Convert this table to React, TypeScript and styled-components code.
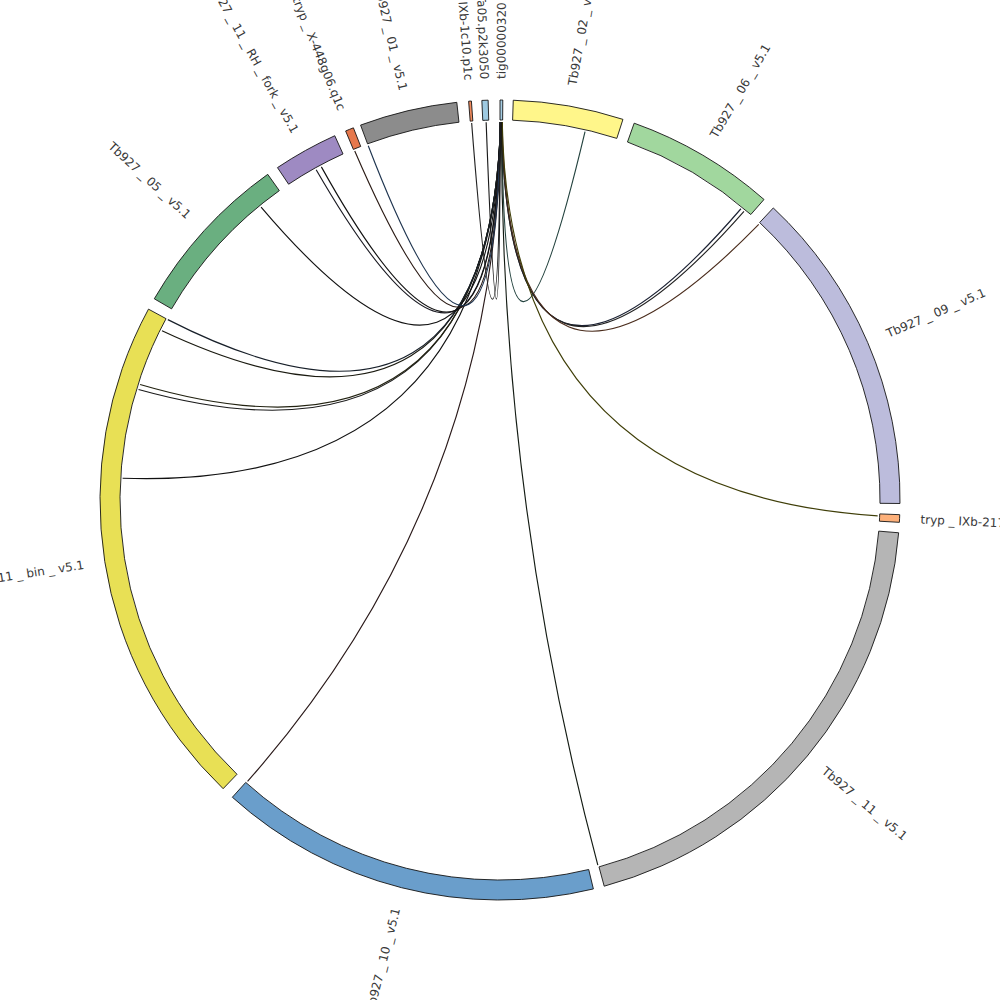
import React from "react";
import styled, { createGlobalStyle } from "styled-components";

const GlobalStyle = createGlobalStyle`
  html, body { margin: 0; padding: 0; background: #ffffff; }
  body { font-family: "DejaVu Sans", Verdana, sans-serif; }
`;

const Page = styled.div`
  display: flex;
  width: 1000px;
  height: 1000px;
  overflow: hidden;
  background: #ffffff;
`;

const Canvas = styled.svg`
  display: block;
  width: 1000px;
  height: 1000px;
`;

const Sector = styled.path<{ $fill: string }>`
  fill: ${(p) => p.$fill};
  stroke: #141414;
  stroke-width: 0.9;
`;

const Link = styled.path<{ $tone: string }>`
  fill: none;
  stroke: ${(p) => p.$tone};
  stroke-width: 1.15;
`;

const Label = styled.text`
  font-family: "DejaVu Sans", Verdana, sans-serif;
  font-size: 12px;
  fill: #383838;
`;

const CX = 500;
const CY = 500;
const R_OUT = 400;
const R_IN = 380;
const R_LINK = 378;
const R_LABEL = 421;

type Seg = { name: string; start: number; end: number; color: string };

const segments: Seg[] = [
  { name: "tig00000320", start: 0.0, end: 0.4, color: "#a6cde3" },
  { name: "Tb927 _ 02 _ v5.1", start: 1.9, end: 17.9, color: "#fff68a" },
  { name: "Tb927 _ 06 _ v5.1", start: 19.6, end: 41.3, color: "#a1d79e" },
  { name: "Tb927 _ 09 _ v5.1", start: 43.1, end: 90.5, color: "#bcbcdc" },
  { name: "tryp _ IXb-217", start: 92.1, end: 93.2, color: "#fdb07a" },
  { name: "Tb927 _ 11 _ v5.1", start: 94.7, end: 164.9, color: "#b5b5b5" },
  { name: "Tb927 _ 10 _ v5.1", start: 166.5, end: 222.0, color: "#6a9ecb" },
  { name: "Tb927 _ 11 _ bin _ v5.1", start: 223.8, end: 298.5, color: "#e8e055" },
  { name: "Tb927 _ 05 _ v5.1", start: 300.2, end: 324.5, color: "#6aaf80" },
  { name: "Tb927 _ 11 _ RH _ fork _ v5.1", start: 326.2, end: 335.6, color: "#9e8ac2" },
  { name: "tryp _ X-448g06.q1c", start: 337.3, end: 338.5, color: "#e6784c" },
  { name: "Tb927 _ 01 _ v5.1", start: 339.6, end: 353.8, color: "#8c8c8c" },
  { name: "tryp _ IXb-1c10.p1c", start: 355.5, end: 355.9, color: "#f08a5d" },
  { name: "Ta05.p2k3050", start: 357.4, end: 358.3, color: "#9ecae1" },
];

type Chord = { from: number; to: number; tone: string };

const chords: Chord[] = [
  { from: 0.3, to: 13.0, tone: "#24433f" },
  { from: 0.28, to: 39.6, tone: "#1c2233" },
  { from: 0.26, to: 40.2, tone: "#222222" },
  { from: 0.32, to: 43.2, tone: "#4a2c1c" },
  { from: 0.34, to: 92.4, tone: "#3f3e08" },
  { from: 0.22, to: 165.0, tone: "#141c14" },
  { from: 0.18, to: 221.9, tone: "#2a1a1a" },
  { from: 0.12, to: 273.3, tone: "#111111" },
  { from: 0.1, to: 287.0, tone: "#1a1a1a" },
  { from: 0.1, to: 287.8, tone: "#222211" },
  { from: 0.08, to: 296.6, tone: "#1a1a10" },
  { from: 0.08, to: 298.5, tone: "#18202a" },
  { from: 0.06, to: 320.8, tone: "#111111" },
  { from: 0.05, to: 330.9, tone: "#1a1a22" },
  { from: 0.05, to: 331.8, tone: "#111111" },
  { from: 0.04, to: 337.4, tone: "#2a1a14" },
  { from: 0.04, to: 339.6, tone: "#1f3550" },
  { from: 0.02, to: 355.7, tone: "#222222" },
  { from: 0.03, to: 357.9, tone: "#1a1a1a" },
];

const rad = (d: number) => (d * Math.PI) / 180;
const pt = (a: number, r: number): [number, number] => [
  CX + r * Math.sin(rad(a)),
  CY - r * Math.cos(rad(a)),
];
const f = (n: number) => n.toFixed(2);

function sectorPath(s: Seg): string {
  const large = s.end - s.start > 180 ? 1 : 0;
  const [ox1, oy1] = pt(s.start, R_OUT);
  const [ox2, oy2] = pt(s.end, R_OUT);
  const [ix2, iy2] = pt(s.end, R_IN);
  const [ix1, iy1] = pt(s.start, R_IN);
  return `M${f(ox1)},${f(oy1)} A${R_OUT},${R_OUT} 0 ${large} 1 ${f(ox2)},${f(oy2)} L${f(ix2)},${f(iy2)} A${R_IN},${R_IN} 0 ${large} 0 ${f(ix1)},${f(iy1)} Z`;
}

function chordPath(c: Chord): string {
  const [x0, y0] = pt(c.from, R_LINK);
  const [x2, y2] = pt(c.to, R_LINK);
  let span = Math.abs(c.to - c.from);
  if (span > 180) span = 360 - span;
  let mid = (c.from + c.to) / 2;
  if (Math.abs(c.to - c.from) > 180) mid += 180;
  const k = 24 * Math.pow(Math.cos(rad(span / 2)), 2);
  const [qx, qy] = pt(mid, k);
  return `M${f(x0)},${f(y0)} Q${f(qx)},${f(qy)} ${f(x2)},${f(y2)}`;
}

function SectorLabel({ s }: { s: Seg }) {
  const mid = (s.start + s.end) / 2;
  const [x, y] = pt(mid, R_LABEL);
  const flip = mid > 180;
  const rot = flip ? mid - 270 : mid - 90;
  return (
    <Label
      x={0}
      y={0}
      transform={`translate(${f(x)},${f(y)}) rotate(${f(rot)})`}
      textAnchor={flip ? "end" : "start"}
      dominantBaseline="central"
    >
      {s.name}
    </Label>
  );
}

export default function App() {
  return (
    <Page>
      <GlobalStyle />
      <Canvas viewBox="0 0 1000 1000" xmlns="http://www.w3.org/2000/svg">
        <g>
          {chords.map((c, i) => (
            <Link key={i} d={chordPath(c)} $tone={c.tone} />
          ))}
        </g>
        <g>
          {segments.map((s) => (
            <Sector key={s.name} d={sectorPath(s)} $fill={s.color} />
          ))}
        </g>
        <g>
          {segments.map((s) => (
            <SectorLabel key={s.name} s={s} />
          ))}
        </g>
      </Canvas>
    </Page>
  );
}
